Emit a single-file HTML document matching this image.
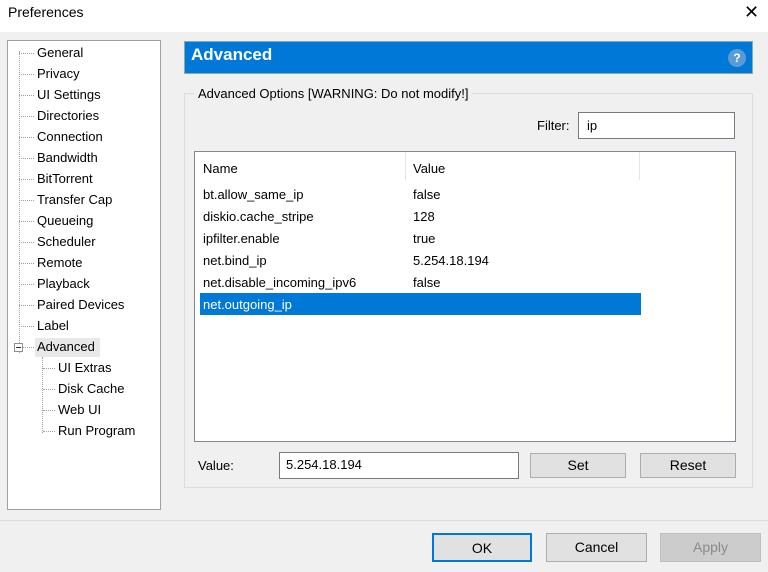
<!DOCTYPE html>
<html><head><style>
*{box-sizing:border-box;margin:0;padding:0}
body{width:768px;height:572px;background:#f0f0f0;font-family:"Liberation Sans",sans-serif;font-size:13px;color:#000;position:relative;overflow:hidden}
.a{position:absolute}
.title{left:0;top:0;width:768px;height:32px;background:#fff}
.tree{left:7px;top:40px;width:154px;height:470px;background:#fff;border:1px solid #a0a0a0}
.ti{position:absolute;left:29px;white-space:nowrap}
.ti:before{content:"";position:absolute;left:-18px;top:8px;width:15px;border-top:1px dotted #a0a0a0}
.sub:before{left:-15px;width:12px}
.btn{position:absolute;background:#e1e1e1;border:1px solid #adadad;text-align:center;line-height:26px;font-size:14px}
.row{position:absolute;left:8px;white-space:nowrap}
.val{position:absolute;left:218px}
</style></head><body>
<div class="a title"><span class="a" style="left:8px;top:4px;font-size:14px">Preferences</span>
<span class="a" style="left:744px;top:2px;font-size:18px">✕</span></div>

<div class="a tree">
<div class="a" style="left:11px;top:10px;height:302px;border-left:1px dotted #a0a0a0"></div>
<div class="ti" style="top:4px">General</div>
<div class="ti" style="top:25px">Privacy</div>
<div class="ti" style="top:46px">UI Settings</div>
<div class="ti" style="top:67px">Directories</div>
<div class="ti" style="top:88px">Connection</div>
<div class="ti" style="top:109px">Bandwidth</div>
<div class="ti" style="top:130px">BitTorrent</div>
<div class="ti" style="top:151px">Transfer Cap</div>
<div class="ti" style="top:172px">Queueing</div>
<div class="ti" style="top:193px">Scheduler</div>
<div class="ti" style="top:214px">Remote</div>
<div class="ti" style="top:235px">Playback</div>
<div class="ti" style="top:256px">Paired Devices</div>
<div class="ti" style="top:277px">Label</div>
<div class="a" style="left:27px;top:297px;width:65px;height:19px;background:#e8e8e8"></div>
<div class="ti" style="top:298px">Advanced</div>
<div class="a" style="left:6px;top:302px;width:9px;height:9px;border:1px solid #909090;background:#fff"><div class="a" style="left:1px;top:3px;width:5px;border-top:1px solid #333"></div></div>
<div class="a" style="left:34px;top:316px;height:76px;border-left:1px dotted #a0a0a0"></div>
<div class="ti sub" style="top:319px;left:50px">UI Extras</div>
<div class="ti sub" style="top:340px;left:50px">Disk Cache</div>
<div class="ti sub" style="top:361px;left:50px">Web UI</div>
<div class="ti sub" style="top:382px;left:50px">Run Program</div>
</div>

<div class="a" style="left:184px;top:41px;width:569px;height:33px;background:#0078d7;border:1px solid #8aa"></div>
<div class="a" style="left:191px;top:45px;color:#fff;font-weight:bold;font-size:17px">Advanced</div>
<div class="a" style="left:728px;top:49px;width:18px;height:18px;border-radius:50%;background:#5b9bd5;color:#fff;font-size:12px;font-weight:bold;text-align:center;line-height:18px">?</div>

<div class="a" style="left:184px;top:93px;width:569px;height:395px;border:1px solid #dcdcdc"></div>
<div class="a" style="left:194px;top:86px;background:#f0f0f0;padding:0 4px">Advanced Options [WARNING: Do not modify!]</div>
<div class="a" style="left:537px;top:118px">Filter:</div>
<div class="a" style="left:578px;top:112px;width:157px;height:27px;background:#fff;border:1px solid #7a7a7a;padding:5px 8px">ip</div>

<div class="a" style="left:194px;top:151px;width:542px;height:291px;background:#fff;border:1px solid #828790">
<div class="a" style="left:210px;top:0;height:28px;border-left:1px solid #e5e5e5"></div>
<div class="a" style="left:444px;top:0;height:28px;border-left:1px solid #e5e5e5"></div>
<div class="row" style="top:9px">Name</div><div class="val" style="top:9px">Value</div>
<div class="row" style="top:35px">bt.allow_same_ip</div><div class="val" style="top:35px">false</div>
<div class="row" style="top:57px">diskio.cache_stripe</div><div class="val" style="top:57px">128</div>
<div class="row" style="top:79px">ipfilter.enable</div><div class="val" style="top:79px">true</div>
<div class="row" style="top:101px">net.bind_ip</div><div class="val" style="top:101px">5.254.18.194</div>
<div class="row" style="top:123px">net.disable_incoming_ipv6</div><div class="val" style="top:123px">false</div>
<div class="a" style="left:5px;top:141px;width:441px;height:22px;background:#0078d7"></div>
<div class="row" style="top:145px;color:#fff">net.outgoing_ip</div>
</div>

<div class="a" style="left:198px;top:458px">Value:</div>
<div class="a" style="left:279px;top:452px;width:240px;height:27px;background:#fff;border:1px solid #7a7a7a;padding:4px 6px">5.254.18.194</div>
<div class="btn" style="left:530px;top:453px;width:96px;height:25px;line-height:23px">Set</div>
<div class="btn" style="left:640px;top:453px;width:96px;height:25px;line-height:23px">Reset</div>

<div class="a" style="left:0;top:520px;width:768px;border-top:1px solid #dcdcdc"></div>
<div class="btn" style="left:432px;top:533px;width:100px;height:29px;border:2px solid #0078d7">OK</div>
<div class="btn" style="left:546px;top:533px;width:101px;height:29px">Cancel</div>
<div class="btn" style="left:660px;top:533px;width:101px;height:29px;background:#ccc;border-color:#bfbfbf;color:#8a8a8a">Apply</div>
</body></html>
